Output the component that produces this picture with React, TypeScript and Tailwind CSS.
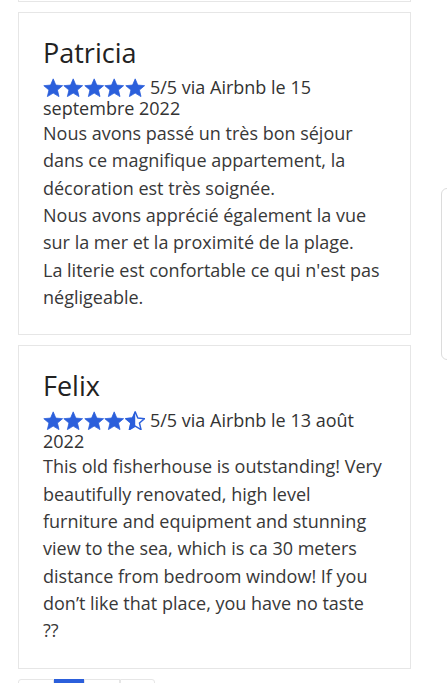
import React from "react";

const BLUE = "#2b5fdb";

function Star({ kind }: { kind: "full" | "half" }) {
  const d =
    "M10.5 0.9L13.2 7.3L20.2 7.9L14.9 12.4L16.5 19.2L10.5 15.6L4.5 19.2L6.1 12.4L0.8 7.9L7.8 7.3Z";
  if (kind === "full") {
    return (
      <svg width="20.4" height="19.4" viewBox="0 0 21 20" className="shrink-0">
        <path d={d} fill={BLUE} stroke={BLUE} strokeWidth="0.8" strokeLinejoin="round" />
      </svg>
    );
  }
  return (
    <svg width="20.4" height="19.4" viewBox="0 0 21 20" className="shrink-0">
      <defs>
        <clipPath id="lefthalf">
          <rect x="0" y="0" width="10.5" height="20" />
        </clipPath>
      </defs>
      <path d={d} fill="none" stroke={BLUE} strokeWidth="1.5" strokeLinejoin="round" />
      <path d={d} fill={BLUE} stroke={BLUE} strokeWidth="0.8" strokeLinejoin="round" clipPath="url(#lefthalf)" />
    </svg>
  );
}

function Review({
  name,
  half,
  rating,
  date2,
  lines,
}: {
  name: string;
  half?: boolean;
  rating: string;
  date2: string;
  lines: string[];
}) {
  return (
    <div className="border border-[#e6e6e6] bg-white pt-[22px] pb-[23px] px-[24px] mb-[10px]">
      <div className="text-[27px] leading-[36px] text-[#222] mb-[6px]">{name}</div>
      <div className="text-[18px] leading-[21px] text-[#333] mb-[1px]">
        <div className="flex items-center whitespace-nowrap">
          <span className="flex items-center">
            <Star kind="full" />
            <Star kind="full" />
            <Star kind="full" />
            <Star kind="full" />
            <Star kind={half ? "half" : "full"} />
          </span>
          <span className="ml-[5px]">{rating}</span>
        </div>
        <div>{date2}</div>
      </div>
      <div className="text-[18px] leading-[27.33px] text-[#383838]">
        {lines.map((l, i) => (
          <div key={i} className="whitespace-nowrap">
            {l}
          </div>
        ))}
      </div>
    </div>
  );
}

export default function App() {
  return (
    <div
      className="relative w-[447px] h-[683px] overflow-hidden bg-white"
      style={{ fontFamily: '"Open Sans", "Noto Sans", sans-serif' }}
    >
      <div className="w-[393px] ml-[18px]">
        <div className="h-[2px] border-x border-b border-[#e6e6e6] mb-[10px]" />
        <Review
          name="Patricia"
          rating="5/5 via Airbnb le 15"
          date2="septembre 2022"
          lines={[
            "Nous avons passé un très bon séjour",
            "dans ce magnifique appartement, la",
            "décoration est très soignée.",
            "Nous avons apprécié également la vue",
            "sur la mer et la proximité de la plage.",
            "La literie est confortable ce qui n'est pas",
            "négligeable.",
          ]}
        />
        <Review
          name="Felix"
          half
          rating="5/5 via Airbnb le 13 août"
          date2="2022"
          lines={[
            "This old fisherhouse is outstanding! Very",
            "beautifully renovated, high level",
            "furniture and equipment and stunning",
            "view to the sea, which is ca 30 meters",
            "distance from bedroom window! If you",
            "don’t like that place, you have no taste",
            "??",
          ]}
        />
        <div className="flex">
          <div className="w-[36px] h-[30px] border border-[#e6e6e6] rounded-tl-[3px]" />
          <div className="w-[30px] h-[30px] bg-[#2b5fdb]" />
          <div className="w-[36px] h-[30px] border border-[#e6e6e6]" />
          <div className="w-[35px] h-[30px] border border-[#e6e6e6] rounded-tr-[3px]" />
        </div>
      </div>
      <div className="absolute left-[441px] top-[188px] w-[20px] h-[172px] rounded-[6px] border border-[#dcdcdc]" />
    </div>
  );
}
